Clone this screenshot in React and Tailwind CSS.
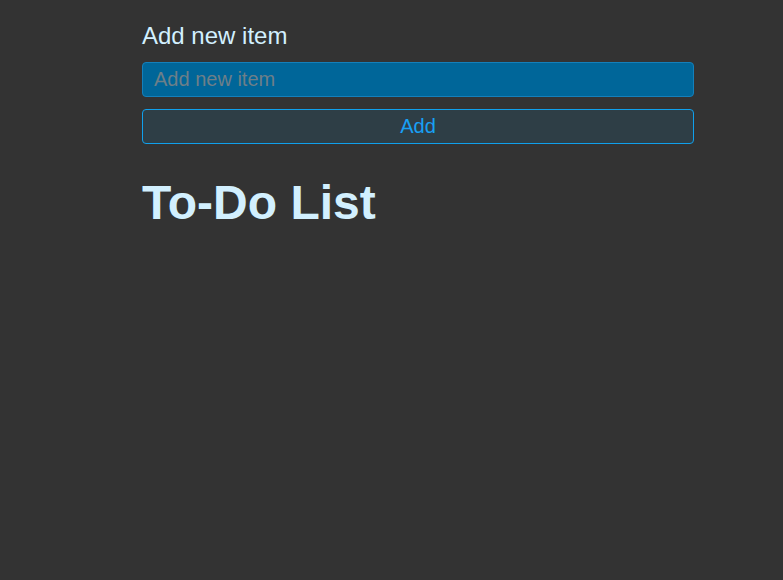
export default function App() {
  return (
    <div className="min-h-[580px] w-full bg-[#333333] font-['Liberation_Sans',Arial,sans-serif]">
      <div className="ml-[142px] w-[552px] pt-[22px]">
        <label className="block text-[24px] leading-[27.6px] text-[#d2f0ff]">Add new item</label>
        <input
          placeholder="Add new item"
          className="mt-[12px] block h-[35px] w-full rounded-[4px] border border-[#1480bb] bg-[#006699] px-[11px] text-[20px] text-[#d2f0ff] outline-none placeholder:text-[#6e7f88]"
        />
        <button className="mt-[12px] block h-[35px] w-full rounded-[4px] border border-[#10a0ec] bg-[#2e3e46] text-[20px] text-[#18a0f5]">
          Add
        </button>
        <h1 className="mt-[31px] text-[48px] font-bold leading-[55px] text-[#d2f0ff]">To-Do List</h1>
      </div>
    </div>
  );
}
